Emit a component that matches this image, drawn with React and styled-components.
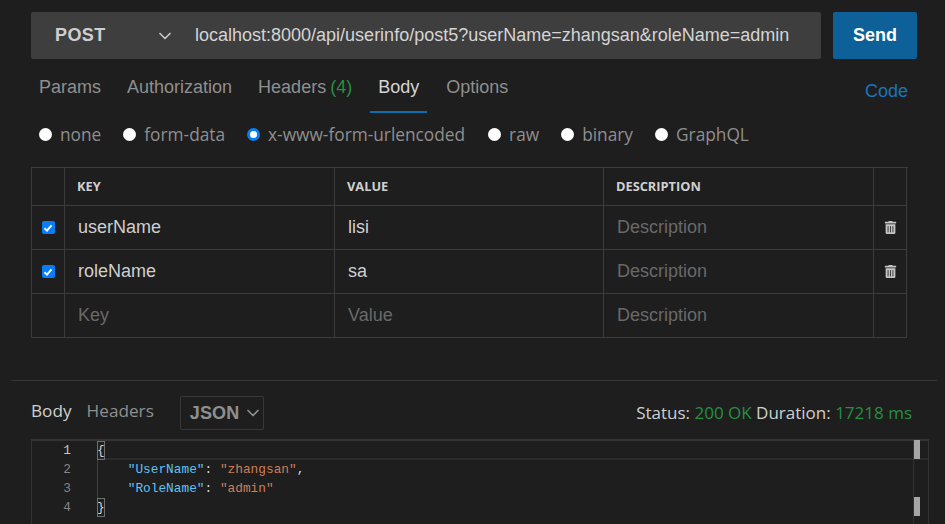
import React from "react";
import styled, { createGlobalStyle } from "styled-components";
import { FaTrashAlt } from "react-icons/fa";
import { FiChevronDown } from "react-icons/fi";

const GlobalStyle = createGlobalStyle`
  html, body { margin: 0; padding: 0; background: #1e1e1e; }
  body { font-family: "Liberation Sans", Arial, sans-serif; overflow: hidden; }
`;

const Page = styled.div`
  width: 945px;
  height: 524px;
  overflow: hidden;
  background: #1e1e1e;
  display: flex;
  flex-direction: column;
`;

const RequestBar = styled.div`
  display: flex;
  gap: 12px;
  margin: 12px 28px 0 31px;
  height: 47px;
`;

const UrlBox = styled.div`
  flex: 1;
  display: flex;
  align-items: center;
  background: #3e3e3e;
  border-radius: 2px;
`;

const Method = styled.div`
  width: 164px;
  padding: 0 20px 0 24px;
  box-sizing: border-box;
  display: flex;
  align-items: center;
  justify-content: space-between;
  color: #cfcfcf;
  font-weight: 700;
  font-size: 18px;
  letter-spacing: 0.4px;
  svg { color: #c8c8c8; font-size: 20px; }
`;

const Url = styled.div`
  color: #d4d4d4;
  font-size: 18px;
  white-space: nowrap;
`;

const SendButton = styled.button`
  width: 84px;
  border: 0;
  border-radius: 2px;
  background: #0d6098;
  color: #fff;
  font: 700 18px "Liberation Sans", Arial, sans-serif;
  padding: 0;
`;

const TabRow = styled.div`
  display: flex;
  position: relative;
  height: 52px;
  padding-left: 31px;
`;

const Tab = styled.div`
  padding: 17px 8px 0;
  margin-right: ${(p) => (p.$active ? 11 : 10)}px;
  height: 35px;
  font-size: 18px;
  line-height: 22px;
  word-spacing: -1px;
  color: ${(p) => (p.$active ? "#d4d4d4" : "#8f8f8f")};
  border-bottom: ${(p) => (p.$active ? "2px solid #0d6ead" : "2px solid transparent")};
  white-space: nowrap;
  span { color: #25903f; }
`;

const CodeLink = styled.a`
  position: absolute;
  right: 37px;
  top: 22px;
  color: #1a75bb;
  font-size: 18px;
`;

const RadioRow = styled.div`
  display: flex;
  align-items: center;
  padding-left: 39px;
  height: 24px;
  margin-top: 11px;
`;

const RadioItem = styled.label`
  display: flex;
  align-items: center;
  gap: 8px;
  margin-right: ${(p) => p.$gap}px;
  font-family: "Open Sans", "Noto Sans", sans-serif;
  font-size: 17.3px;
  color: #8f8f8f;
`;

const RadioDot = styled.i`
  display: block;
  box-sizing: border-box;
  width: 13px;
  height: 13px;
  border-radius: 50%;
  background: #fff;
  border: ${(p) => (p.$on ? "3px solid #0a7cf5" : "0")};
`;

const ParamTable = styled.div`
  display: grid;
  grid-template-columns: 33px 270px 269px 270px 33px;
  grid-template-rows: 38px 44px 44px 44px;
  margin: 21px 0 0 31px;
  width: 876px;
  border-left: 1px solid #3c3c3c;
  border-top: 1px solid #3c3c3c;
  box-sizing: content-box;
`;

const Cell = styled.div`
  display: flex;
  align-items: center;
  justify-content: ${(p) => (p.$center ? "center" : "flex-start")};
  padding-left: ${(p) => (p.$center ? 0 : 13)}px;
  border-right: 1px solid #3c3c3c;
  border-bottom: 1px solid #3c3c3c;
  font-size: 18px;
  color: ${(p) => (p.$muted ? "#696969" : "#cfcfcf")};
  svg { color: #c4c4c4; font-size: 13px; }
`;

const HeadCell = styled(Cell)`
  padding-left: 12px;
  padding-bottom: 2px;
  font-family: "Open Sans", "Noto Sans", sans-serif;
  font-weight: 700;
  font-size: 12.8px;
  color: #d0d0d0;
`;

const CheckBox = styled.span`
  width: 13px;
  height: 13px;
  border-radius: 2px;
  background: #0a7cf5;
  display: flex;
  align-items: center;
  justify-content: center;
  svg { display: block; color: #fff; }
`;

const Divider = styled.div`
  height: 1px;
  margin: 42px 8px 0 11px;
  background: #353535;
`;

const ResponseBar = styled.div`
  display: flex;
  align-items: center;
  height: 34px;
  margin: 15px 33px 0 31px;
`;

const ResponseTab = styled.div`
  font-family: "Open Sans", "Noto Sans", sans-serif;
  font-size: 17.2px;
  margin-right: 15px;
  margin-top: -5px;
  color: ${(p) => (p.$active ? "#cfcfcf" : "#8f8f8f")};
`;

const FormatSelect = styled.div`
  width: 84px;
  height: 34px;
  box-sizing: border-box;
  margin-left: 11px;
  border: 1px solid #383838;
  border-radius: 2px;
  display: flex;
  align-items: center;
  justify-content: space-between;
  padding: 0 0 0 9px;
  font-weight: 700;
  font-size: 18px;
  letter-spacing: 0.1px;
  color: #8f8f8f;
  svg { font-size: 20px; }
`;

const StatusText = styled.div`
  margin-left: auto;
  margin-top: -2px;
  font-family: "Open Sans", "Noto Sans", sans-serif;
  font-size: 17px;
  color: #cfcfcf;
  white-space: nowrap;
  b { font-weight: 400; color: #25903f; }
`;

const Editor = styled.div`
  position: relative;
  flex: 1;
  margin: 9px 16px 0 31px;
  display: grid;
  grid-template-columns: 65px 1fr;
  border-left: 1px solid #333;
  border-top: 2px solid #333;
  border-right: 1px solid #333;
  font-family: "Liberation Mono", monospace;
  font-size: 12.8px;
  line-height: 19px;
`;

const Gutter = styled.div`
  text-align: right;
  padding-right: 26px;
  color: #858585;
  div:first-child { color: #c6c6c6; }
`;

const Code = styled.div`
  position: relative;
  white-space: pre;
  color: #d4d4d4;
`;

const CodeLine = styled.div`
  height: 19px;
  box-sizing: border-box;
  ${(p) => p.$current && `
    border-bottom: 2px solid #2b2b2b;
  `}
`;

const IndentGuide = styled.i`
  position: absolute;
  left: 0;
  top: 19px;
  height: 38px;
  border-left: 1px solid #404040;
`;

const Bracket = styled.span`
  outline: 1px solid #707070;
  outline-offset: -1px;
  display: inline-block;
  height: 19px;
`;

const Key = styled.span`
  color: #5fc2f5;
`;

const Str = styled.span`
  color: #ce7d5b;
`;

const Ruler = styled.div`
  position: absolute;
  top: 0;
  bottom: 0;
  right: 0;
  width: 14px;
  border-left: 1px solid #333;
  background: #1e1e1e;
  &::before {
    content: "";
    position: absolute;
    left: 0;
    right: 0;
    top: 17px;
    height: 2px;
    background: #2b2b2b;
  }
`;

const RulerMark = styled.i`
  position: absolute;
  left: 0;
  top: ${(p) => p.$top}px;
  width: 6px;
  height: 19px;
  background: #a6a6a6;
`;

const Check = () => (
  <CheckBox>
    <svg width="10" height="10" viewBox="0 0 10 10">
      <path d="M1.5 5.2 L4 7.6 L8.5 2.4" fill="none" stroke="currentColor" strokeWidth="2" />
    </svg>
  </CheckBox>
);

const radios = [
  { label: "none", gap: 22 },
  { label: "form-data", gap: 22 },
  { label: "x-www-form-urlencoded", gap: 23 },
  { label: "raw", gap: 22 },
  { label: "binary", gap: 22 },
  { label: "GraphQL", gap: 0 },
];

const rows = [
  { key: "userName", value: "lisi" },
  { key: "roleName", value: "sa" },
];

export default function App() {
  return (
    <Page>
      <GlobalStyle />
      <RequestBar>
        <UrlBox>
          <Method>
            POST
            <FiChevronDown />
          </Method>
          <Url>localhost:8000/api/userinfo/post5?userName=zhangsan&amp;roleName=admin</Url>
        </UrlBox>
        <SendButton>Send</SendButton>
      </RequestBar>

      <TabRow>
        <Tab>Params</Tab>
        <Tab>Authorization</Tab>
        <Tab>
          Headers <span>(4)</span>
        </Tab>
        <Tab $active>Body</Tab>
        <Tab>Options</Tab>
        <CodeLink>Code</CodeLink>
      </TabRow>

      <RadioRow>
        {radios.map((item) => (
          <RadioItem key={item.label} $gap={item.gap}>
            <RadioDot $on={item.label === "x-www-form-urlencoded"} />
            {item.label}
          </RadioItem>
        ))}
      </RadioRow>

      <ParamTable>
        <HeadCell />
        <HeadCell>KEY</HeadCell>
        <HeadCell>VALUE</HeadCell>
        <HeadCell>DESCRIPTION</HeadCell>
        <HeadCell />
        {rows.map((row) => (
          <React.Fragment key={row.key}>
            <Cell $center>
              <Check />
            </Cell>
            <Cell>{row.key}</Cell>
            <Cell>{row.value}</Cell>
            <Cell $muted>Description</Cell>
            <Cell $center>
              <FaTrashAlt />
            </Cell>
          </React.Fragment>
        ))}
        <Cell />
        <Cell $muted>Key</Cell>
        <Cell $muted>Value</Cell>
        <Cell $muted>Description</Cell>
        <Cell />
      </ParamTable>

      <Divider />

      <ResponseBar>
        <ResponseTab $active>Body</ResponseTab>
        <ResponseTab>Headers</ResponseTab>
        <FormatSelect>
          JSON
          <FiChevronDown />
        </FormatSelect>
        <StatusText>
          Status: <b>200 OK</b> Duration: <b>17218 ms</b>
        </StatusText>
      </ResponseBar>

      <Editor>
        <Gutter>
          <div>1</div>
          <div>2</div>
          <div>3</div>
          <div>4</div>
        </Gutter>
        <Code>
          <IndentGuide />
          <CodeLine $current>
            <Bracket>{"{"}</Bracket>
          </CodeLine>
          <CodeLine>
            {"    "}
            <Key>"UserName"</Key>: <Str>"zhangsan"</Str>,
          </CodeLine>
          <CodeLine>
            {"    "}
            <Key>"RoleName"</Key>: <Str>"admin"</Str>
          </CodeLine>
          <CodeLine>
            <Bracket>{"}"}</Bracket>
          </CodeLine>
        </Code>
        <Ruler>
          <RulerMark $top={-1} />
          <RulerMark $top={56} />
        </Ruler>
      </Editor>
    </Page>
  );
}
